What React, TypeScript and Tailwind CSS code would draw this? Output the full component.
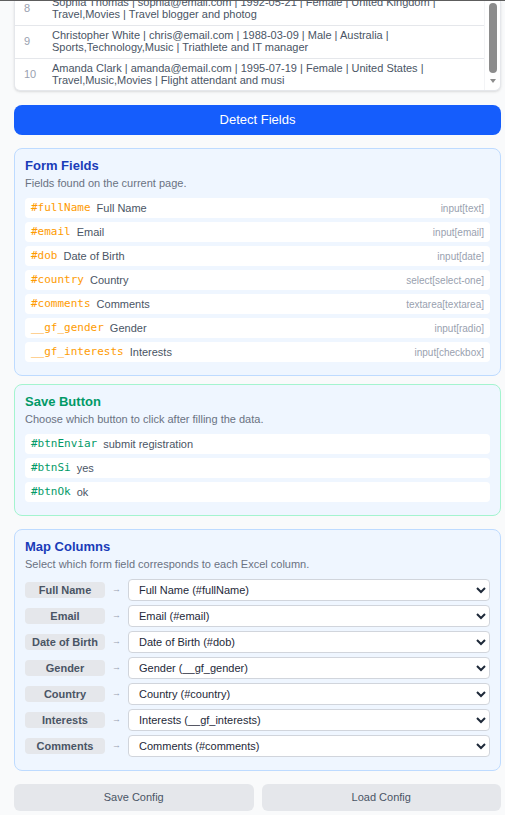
import { useState } from "react";

// Rows of the uploaded sheet (preview list, scrolled to the end)
const sheetRows = [
  {
    n: 8,
    lines: [
      "Sophia Thomas | sophia@email.com | 1992-05-21 | Female | United Kingdom |",
      "Travel,Movies | Travel blogger and photog",
    ],
  },
  {
    n: 9,
    lines: [
      "Christopher White | chris@email.com | 1988-03-09 | Male | Australia |",
      "Sports,Technology,Music | Triathlete and IT manager",
    ],
  },
  {
    n: 10,
    lines: [
      "Amanda Clark | amanda@email.com | 1995-07-19 | Female | United States |",
      "Travel,Music,Movies | Flight attendant and musi",
    ],
  },
];

const fields = [
  { sel: "#fullName", label: "Full Name", type: "input[text]" },
  { sel: "#email", label: "Email", type: "input[email]" },
  { sel: "#dob", label: "Date of Birth", type: "input[date]" },
  { sel: "#country", label: "Country", type: "select[select-one]" },
  { sel: "#comments", label: "Comments", type: "textarea[textarea]" },
  { sel: "__gf_gender", label: "Gender", type: "input[radio]" },
  { sel: "__gf_interests", label: "Interests", type: "input[checkbox]" },
];

const saveButtons = [
  { sel: "#btnEnviar", label: "submit registration" },
  { sel: "#btnSi", label: "yes" },
  { sel: "#btnOk", label: "ok" },
];

// Excel column -> form field selector
const initialMapping: [string, string][] = [
  ["Full Name", "#fullName"],
  ["Email", "#email"],
  ["Date of Birth", "#dob"],
  ["Gender", "__gf_gender"],
  ["Country", "#country"],
  ["Interests", "__gf_interests"],
  ["Comments", "#comments"],
];

const App = () => {
  const [mapping, setMapping] = useState(initialMapping);

  return (
    <div className="min-h-[815px] bg-gray-50 font-['Liberation_Sans',Arial,sans-serif]">
      <div className="h-px bg-[#5f5f5f]" />

      <div className="ml-[14px] w-[487px]">
        {/* Sheet preview */}
        <div className="flex h-[90px] overflow-hidden rounded-b-md border-x border-b border-gray-200 bg-white shadow-sm">
          <div className="flex-1 overflow-hidden">
            <div className="-mt-[8px]">
              {sheetRows.map((row) => (
                <div key={row.n} className="flex border-b border-gray-200 pt-[3px] pb-[5px] text-[11px] leading-[12px]">
                  <div className="flex w-[37px] items-center pl-[9px] text-gray-400">{row.n}</div>
                  <div className="text-gray-600">
                    {row.lines.map((l, i) => (
                      <div key={i} className="whitespace-nowrap">{l}</div>
                    ))}
                  </div>
                </div>
              ))}
            </div>
          </div>
          {/* scrollbar */}
          <div className="flex w-[16px] flex-col items-center border-l border-gray-100">
            <div className="mt-[2px] h-[70px] w-[8px] rounded-full bg-[#8c8c8c]" />
            <div className="mt-[6px] h-0 w-0 border-x-[3px] border-t-[4px] border-x-transparent border-t-[#8c8c8c]" />
          </div>
        </div>

        <button className="mt-[14px] flex h-[30px] w-full items-center justify-center rounded-lg bg-blue-600 text-[13px] text-white">
          Detect Fields
        </button>

        {/* Form Fields */}
        <div className="mt-[13px] rounded-lg border border-blue-200 bg-blue-50 px-[10px] pt-[9px] pb-[13px]">
          <h2 className="text-[13px] leading-[16px] font-bold text-blue-800">Form Fields</h2>
          <p className="mt-[2px] text-[11px] leading-[14px] text-gray-500">Fields found on the current page.</p>
          <div className="mt-[8px] flex flex-col gap-[4px]">
            {fields.map((f) => (
              <div key={f.sel} className="flex h-[20px] items-center rounded bg-white px-[6px]">
                <span className="font-['DejaVu_Sans_Mono',monospace] text-[11px] text-amber-500">{f.sel}</span>
                <span className="ml-[6px] text-[11px] text-gray-600">{f.label}</span>
                <span className="ml-auto text-[10px] text-gray-400">{f.type}</span>
              </div>
            ))}
          </div>
        </div>

        {/* Save Button */}
        <div className="mt-[8px] rounded-lg border border-emerald-200 bg-blue-50 px-[10px] pt-[9px] pb-[13px]">
          <h2 className="text-[13px] leading-[16px] font-bold text-emerald-600">Save Button</h2>
          <p className="mt-[2px] text-[11px] leading-[14px] text-gray-500">
            Choose which button to click after filling the data.
          </p>
          <div className="mt-[8px] flex flex-col gap-[4px]">
            {saveButtons.map((b) => (
              <div key={b.sel} className="flex h-[20px] items-center rounded bg-white px-[6px]">
                <span className="font-['DejaVu_Sans_Mono',monospace] text-[11px] text-emerald-600">{b.sel}</span>
                <span className="ml-[6px] text-[11px] text-gray-600">{b.label}</span>
              </div>
            ))}
          </div>
        </div>

        {/* Map Columns */}
        <div className="mt-[13px] rounded-lg border border-blue-200 bg-blue-50 px-[10px] pt-[9px] pb-[13px]">
          <h2 className="text-[13px] leading-[16px] font-bold text-blue-800">Map Columns</h2>
          <p className="mt-[2px] text-[11px] leading-[14px] text-gray-500">
            Select which form field corresponds to each Excel column.
          </p>
          <div className="mt-[8px] flex flex-col gap-[4px]">
            {mapping.map(([col, sel], i) => (
              <div key={col} className="flex h-[22px] items-center">
                <div className="flex h-[16px] w-[80px] items-center justify-center rounded-sm bg-gray-200 text-[11px] font-bold text-gray-600">
                  {col}
                </div>
                <div className="w-[23px] text-center text-[9px] text-gray-400">→</div>
                <select
                  value={sel}
                  onChange={(e) => {
                    const next = [...mapping];
                    next[i] = [col, e.target.value];
                    setMapping(next);
                  }}
                  className="h-[22px] flex-1 rounded border border-gray-300 bg-white pl-[6px] text-[11px] text-gray-800"
                >
                  {fields.map((f) => (
                    <option key={f.sel} value={f.sel}>
                      {f.label} ({f.sel})
                    </option>
                  ))}
                </select>
              </div>
            ))}
          </div>
        </div>

        <div className="mt-[13px] flex gap-[8px]">
          <button className="h-[27px] flex-1 rounded-md bg-gray-200 text-[11px] text-gray-600">Save Config</button>
          <button className="h-[27px] flex-1 rounded-md bg-gray-200 text-[11px] text-gray-600">Load Config</button>
        </div>
      </div>
    </div>
  );
};

export default App;
